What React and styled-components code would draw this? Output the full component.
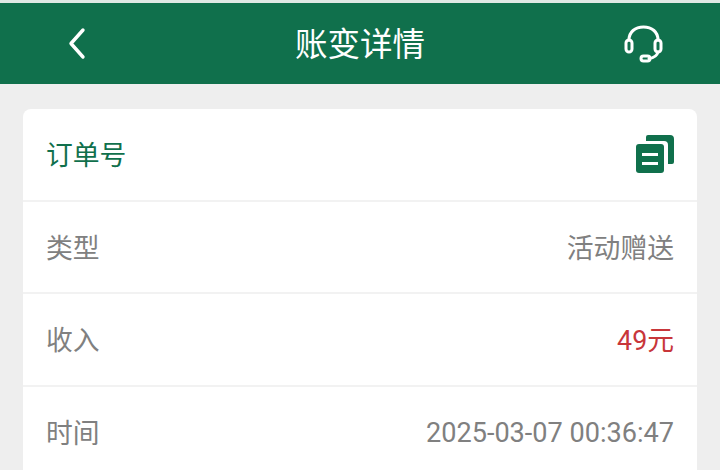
import React from "react";
import styled, { createGlobalStyle } from "styled-components";

const Global = createGlobalStyle`
  html, body {
    margin: 0;
    padding: 0;
    height: 470px;
    overflow: hidden;
    background: #eeeeee;
  }
`;

const Page = styled.div`
  width: 720px;
  height: 470px;
  overflow: hidden;
  background: #eeeeee;
  font-family: "Noto Sans CJK SC", Roboto, sans-serif;
`;

const TopLine = styled.div`
  height: 3px;
  background: #dfe9e4;
`;

const Header = styled.div`
  height: 81px;
  background: #10704c;
  display: flex;
  align-items: center;
  justify-content: space-between;
  padding: 0 56px 0 66px;
  color: #fff;
`;

const Title = styled.div`
  font-size: 32.5px;
  line-height: 44px;
  margin: 0 0 4px 6px;
`;

const Card = styled.div`
  margin: 25px 23px 0;
  background: #fff;
  border-radius: 8px;
`;

const Row = styled.div`
  box-sizing: border-box;
  height: 92.7px;
  padding: 0 23px 2px 23px;
  display: flex;
  align-items: center;
  justify-content: space-between;
  border-bottom: 2px solid #f2f2f2;
`;

const Label = styled.div`
  font-size: 26.8px;
  margin-bottom: ${(props) => (props.$green ? "-1px" : "0")};
  color: ${(props) => (props.$green ? "#10704c" : "#808080")};
`;

const Value = styled.div`
  font-size: ${(props) => (props.$num ? "27.1px" : "26.8px")};
  margin-bottom: ${(props) => (props.$num ? "-4px" : "0")};
  font-family: Roboto, "Noto Sans CJK SC", sans-serif;
  color: ${(props) => (props.$red ? "#c8363a" : "#808080")};
`;

const CopyButton = styled.svg`
  margin-top: 2px;
`;

const BackIcon = () => (
  <svg width="24" height="34" viewBox="0 0 24 34" fill="none" stroke="#fff" strokeWidth="3.4" strokeLinecap="round" strokeLinejoin="round">
    <path d="M17 3 L5 16.5 L17 30" />
  </svg>
);

const ServiceIcon = () => (
  <svg width="40" height="38" viewBox="0 0 40 38" fill="none" stroke="#fff" strokeWidth="3" strokeLinecap="round">
    <path d="M5 15 C5 7 11 2 19.5 2 C28 2 34 7 34 15" />
    <rect x="2" y="15" width="6" height="12" rx="3" />
    <rect x="31" y="15" width="6" height="12" rx="3" />
    <path d="M34 27 C33 31 29 33 25 33.5" />
    <rect x="17" y="31" width="9" height="5" rx="2.5" />
  </svg>
);

const CopyIcon = () => (
  <CopyButton width="38" height="38" viewBox="0 0 38 38" fill="#10704c">
    <path d="M12 0 H34 a4 4 0 0 1 4 4 V27 a2 2 0 0 1 -2 2 H32 V10 a4 4 0 0 0 -4 -4 H10 V2 a2 2 0 0 1 2 -2 Z" />
    <rect x="0" y="9" width="28" height="29" rx="3" />
    <rect x="6" y="18" width="16" height="3" fill="#fff" />
    <rect x="6" y="27" width="16" height="3" fill="#fff" />
  </CopyButton>
);

const App = () => {
  return (
    <Page>
      <Global />
      <TopLine />
      <Header>
        <BackIcon />
        <Title>账变详情</Title>
        <ServiceIcon />
      </Header>
      <Card>
        <Row>
          <Label $green>订单号</Label>
          <CopyIcon />
        </Row>
        <Row>
          <Label>类型</Label>
          <Value>活动赠送</Value>
        </Row>
        <Row>
          <Label>收入</Label>
          <Value $red>49元</Value>
        </Row>
        <Row>
          <Label>时间</Label>
          <Value $num>2025-03-07 00:36:47</Value>
        </Row>
      </Card>
    </Page>
  );
};

export default App;
